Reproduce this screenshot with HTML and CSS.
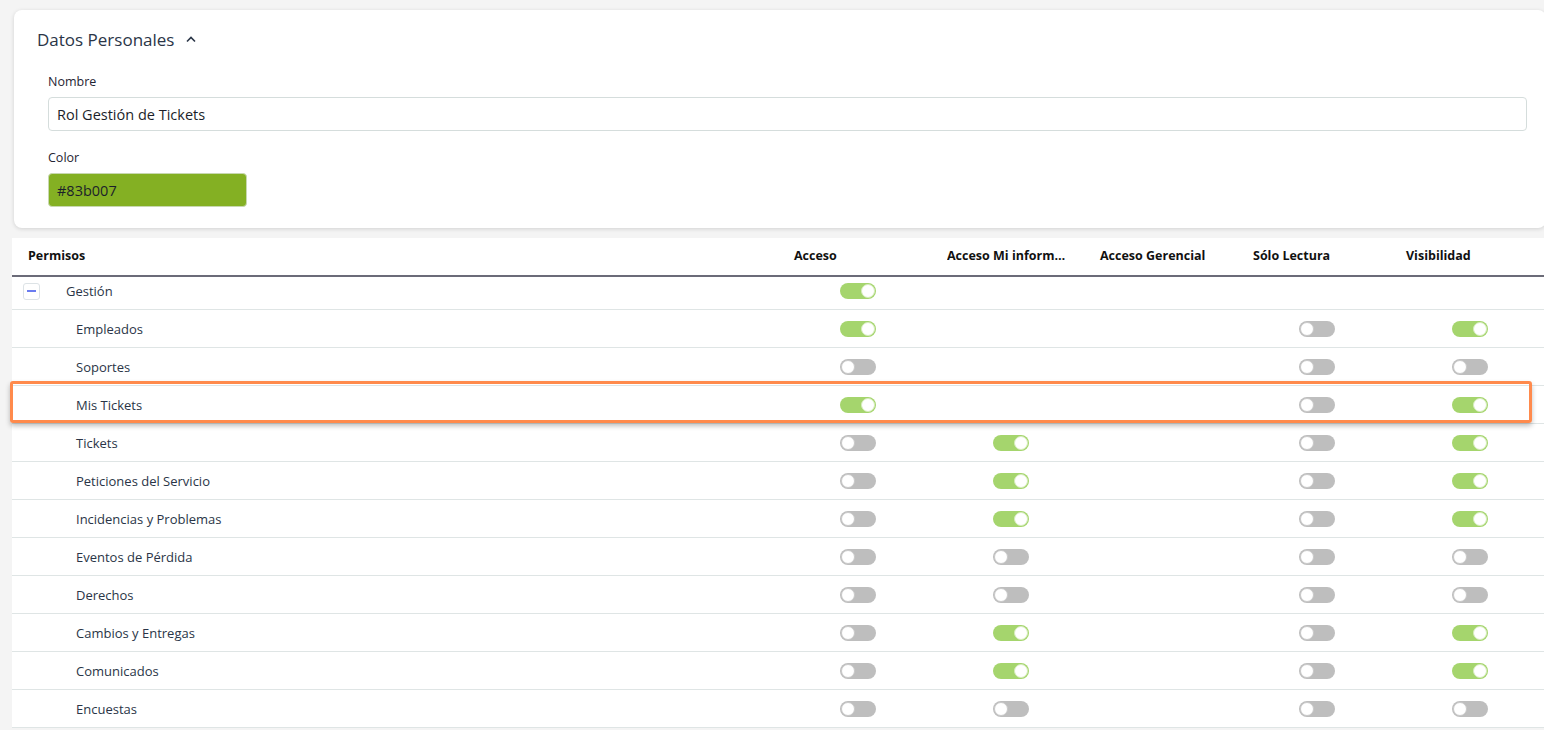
FILE: index.html
```html
<!DOCTYPE html>
<html lang="es">
<head>
  <meta charset="UTF-8" />
  <title>Rol Gestión de Tickets</title>
  <link rel="stylesheet" href="styles.css">
</head>
<body>

<div class="page">

  <section class="card">
    <div class="card-title">
      <span>Datos Personales</span>
      <svg class="chevron" width="12" height="8" viewBox="0 0 12 8"><path d="M2 6.5 L6 2.5 L10 6.5" fill="none" stroke="#2a3547" stroke-width="1.6"/></svg>
    </div>

    <div class="field">
      <label>Nombre</label>
      <div class="input">Rol Gestión de Tickets</div>
    </div>

    <div class="field">
      <label>Color</label>
      <div class="input color-input">#83b007</div>
    </div>
  </section>

  <div class="perms">
    <div class="perm-row perm-head">
      <div class="cell first">Permisos</div>
      <div class="cell">Acceso</div>
      <div class="cell"><span class="clip">Acceso Mi información</span></div>
      <div class="cell">Acceso Gerencial</div>
      <div class="cell">Sólo Lectura</div>
      <div class="cell">Visibilidad</div>
    </div>

    <div class="perm-row group">
      <div class="cell first"><span class="collapse"></span>Gestión</div>
      <div class="cell tgl"><span class="toggle on"></span></div>
      <div class="cell tgl"></div>
      <div class="cell tgl"></div>
      <div class="cell tgl"></div>
      <div class="cell tgl"></div>
    </div>

    <div class="perm-row">
      <div class="cell first child">Empleados</div>
      <div class="cell tgl"><span class="toggle on"></span></div>
      <div class="cell tgl"></div>
      <div class="cell tgl"></div>
      <div class="cell tgl"><span class="toggle"></span></div>
      <div class="cell tgl"><span class="toggle on"></span></div>
    </div>

    <div class="perm-row">
      <div class="cell first child">Soportes</div>
      <div class="cell tgl"><span class="toggle"></span></div>
      <div class="cell tgl"></div>
      <div class="cell tgl"></div>
      <div class="cell tgl"><span class="toggle"></span></div>
      <div class="cell tgl"><span class="toggle"></span></div>
    </div>

    <div class="perm-row marked">
      <div class="cell first child">Mis Tickets</div>
      <div class="cell tgl"><span class="toggle on"></span></div>
      <div class="cell tgl"></div>
      <div class="cell tgl"></div>
      <div class="cell tgl"><span class="toggle"></span></div>
      <div class="cell tgl"><span class="toggle on"></span></div>
    </div>

    <div class="perm-row">
      <div class="cell first child">Tickets</div>
      <div class="cell tgl"><span class="toggle"></span></div>
      <div class="cell tgl"><span class="toggle on"></span></div>
      <div class="cell tgl"></div>
      <div class="cell tgl"><span class="toggle"></span></div>
      <div class="cell tgl"><span class="toggle on"></span></div>
    </div>

    <div class="perm-row">
      <div class="cell first child">Peticiones del Servicio</div>
      <div class="cell tgl"><span class="toggle"></span></div>
      <div class="cell tgl"><span class="toggle on"></span></div>
      <div class="cell tgl"></div>
      <div class="cell tgl"><span class="toggle"></span></div>
      <div class="cell tgl"><span class="toggle on"></span></div>
    </div>

    <div class="perm-row">
      <div class="cell first child">Incidencias y Problemas</div>
      <div class="cell tgl"><span class="toggle"></span></div>
      <div class="cell tgl"><span class="toggle on"></span></div>
      <div class="cell tgl"></div>
      <div class="cell tgl"><span class="toggle"></span></div>
      <div class="cell tgl"><span class="toggle on"></span></div>
    </div>

    <div class="perm-row">
      <div class="cell first child">Eventos de Pérdida</div>
      <div class="cell tgl"><span class="toggle"></span></div>
      <div class="cell tgl"><span class="toggle"></span></div>
      <div class="cell tgl"></div>
      <div class="cell tgl"><span class="toggle"></span></div>
      <div class="cell tgl"><span class="toggle"></span></div>
    </div>

    <div class="perm-row">
      <div class="cell first child">Derechos</div>
      <div class="cell tgl"><span class="toggle"></span></div>
      <div class="cell tgl"><span class="toggle"></span></div>
      <div class="cell tgl"></div>
      <div class="cell tgl"><span class="toggle"></span></div>
      <div class="cell tgl"><span class="toggle"></span></div>
    </div>

    <div class="perm-row">
      <div class="cell first child">Cambios y Entregas</div>
      <div class="cell tgl"><span class="toggle"></span></div>
      <div class="cell tgl"><span class="toggle on"></span></div>
      <div class="cell tgl"></div>
      <div class="cell tgl"><span class="toggle"></span></div>
      <div class="cell tgl"><span class="toggle on"></span></div>
    </div>

    <div class="perm-row">
      <div class="cell first child">Comunicados</div>
      <div class="cell tgl"><span class="toggle"></span></div>
      <div class="cell tgl"><span class="toggle on"></span></div>
      <div class="cell tgl"></div>
      <div class="cell tgl"><span class="toggle"></span></div>
      <div class="cell tgl"><span class="toggle on"></span></div>
    </div>

    <div class="perm-row">
      <div class="cell first child">Encuestas</div>
      <div class="cell tgl"><span class="toggle"></span></div>
      <div class="cell tgl"><span class="toggle"></span></div>
      <div class="cell tgl"></div>
      <div class="cell tgl"><span class="toggle"></span></div>
      <div class="cell tgl"><span class="toggle"></span></div>
    </div>
  </div>

</div>

</body>
</html>
```

FILE: styles.css
```css
:root {
  --bg-page: #f4f4f4;
  --text-main: #2a3547;
  --line: #dfe5e5;
  --on: #a5d56d;
  --off: #bebebe;
  --mark: #ff8a4c;
}

html, body {
  margin: 0;
  height: 100%;
  overflow: hidden;
}

body {
  font-family: "Open Sans", "Liberation Sans", sans-serif;
  background: var(--bg-page);
  color: var(--text-main);
}

.page {
  width: 1546px;
  padding-top: 10px;
}

/* datos personales */

.card {
  margin-left: 14px;
  background: #fff;
  border-radius: 8px;
  box-shadow: 0 1px 4px rgba(0, 0, 0, 0.14);
  padding: 17px 19px 21px 23px;
}

.card-title {
  display: flex;
  align-items: center;
  gap: 11px;
  height: 25px;
  font-size: 17px;
  margin-bottom: 20px;
}

.chevron {
  margin-top: -2px;
}

.field {
  padding-left: 11px;
}

.field + .field {
  margin-top: 17px;
}

.field label {
  display: block;
  font-size: 12.5px;
  line-height: 20px;
  margin-bottom: 5px;
  color: #1f2433;
}

.input {
  box-sizing: border-box;
  height: 34px;
  border: 1px solid #d5dddc;
  border-radius: 4px;
  padding: 0 8px;
  display: flex;
  align-items: center;
  font-size: 14.5px;
  color: #1c1f2a;
}

.color-input {
  width: 199px;
  background: #84b023;
  border-color: #c8d8b0;
}

/* permisos */

.perms {
  margin-top: 10px;
  margin-left: 12px;
  background: #fff;
}

.perm-row {
  display: grid;
  grid-template-columns: 769px repeat(5, 153px);
  height: 37px;
  border-bottom: 1px solid var(--line);
  font-size: 13px;
  position: relative;
}

.cell {
  display: flex;
  align-items: center;
  padding: 0 13px;
  min-width: 0;
}

.cell.first {
  padding-left: 16px;
}

.perm-head {
  height: 37px;
  border-bottom: 2px solid #6b6b78;
  font-weight: 700;
  color: #111;
  font-size: 12.5px;
}

.perm-head .cell {
  padding-bottom: 2px;
}

.clip {
  display: block;
  max-width: 122px;
  white-space: nowrap;
  overflow: hidden;
  text-overflow: ellipsis;
}

.group {
  height: 32px;
}

.group .cell {
  padding-bottom: 4px;
}

.group .cell.first {
  padding-left: 11px;
}

.collapse {
  box-sizing: border-box;
  width: 17px;
  height: 17px;
  border: 1px solid #dde3e6;
  border-radius: 3px;
  margin-right: 26px;
  position: relative;
}

.collapse::after {
  content: "";
  position: absolute;
  left: 3px;
  top: 6.5px;
  width: 9px;
  height: 2px;
  background: #6b7cf0;
}

.child {
  padding-left: 64px !important;
}

.tgl {
  justify-content: center;
  padding: 0;
}

.toggle {
  position: relative;
  width: 36px;
  height: 16px;
  border-radius: 8px;
  background: var(--off);
}

.toggle::after {
  content: "";
  position: absolute;
  top: 1px;
  left: 1px;
  width: 14px;
  height: 14px;
  box-sizing: border-box;
  border-radius: 50%;
  background: #fff;
  border: 1px solid #c9c9c9;
}

.toggle.on {
  background: var(--on);
}

.toggle.on::after {
  left: auto;
  right: 1px;
  border-color: #d6ecbd;
}

/* resaltado de la fila */

.marked::before {
  content: "";
  position: absolute;
  left: -2px;
  top: -5px;
  width: 1522px;
  height: 42px;
  box-sizing: border-box;
  border: 3px solid var(--mark);
  border-radius: 3px;
  box-shadow: 0 3px 5px rgba(0, 0, 0, 0.25);
  pointer-events: none;
}
```
